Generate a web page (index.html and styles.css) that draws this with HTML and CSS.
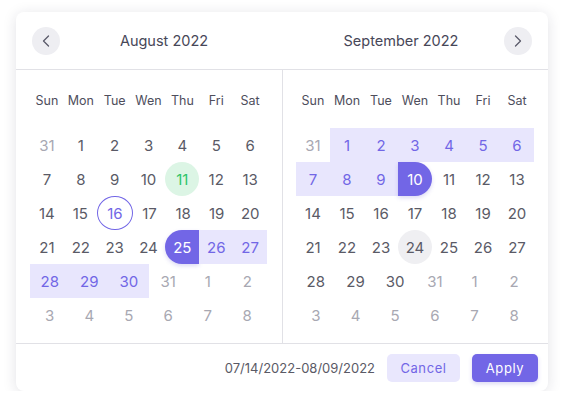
FILE: index.html
```html
<!DOCTYPE html>
<html>
<head>
<meta charset="utf-8">
<link rel="stylesheet" href="styles.css">
</head>
<body>
<div class="card">
  <div class="header">
    <div class="half half-left">
      <button class="nav"><svg width="12" height="12" viewBox="0 0 12 12"><polyline points="8.5,1 3.5,6 8.5,11" fill="none" stroke="#5a5a6a" stroke-width="1.3" stroke-linecap="round" stroke-linejoin="round"/></svg></button>
      <div class="title">August 2022</div>
    </div>
    <div class="half half-right">
      <div class="title">September 2022</div>
      <button class="nav"><svg width="12" height="12" viewBox="0 0 12 12"><polyline points="3.5,1 8.5,6 3.5,11" fill="none" stroke="#5a5a6a" stroke-width="1.3" stroke-linecap="round" stroke-linejoin="round"/></svg></button>
    </div>
  </div>
  <div class="body">
    <div class="panel panel-left">
      <div class="row wd"><span>Sun</span><span>Mon</span><span>Tue</span><span>Wen</span><span>Thu</span><span>Fri</span><span>Sat</span></div>
      <div class="rows">
        <div class="row"><span class="out">31</span><span>1</span><span>2</span><span>3</span><span>4</span><span>5</span><span>6</span></div>
        <div class="row"><span>7</span><span>8</span><span>9</span><span>10</span><span class="today">11</span><span>12</span><span>13</span></div>
        <div class="row"><span>14</span><span>15</span><span class="ring">16</span><span>17</span><span>18</span><span>19</span><span>20</span></div>
        <div class="row"><span>21</span><span>22</span><span>23</span><span>24</span><span class="start">25</span><span class="range">26</span><span class="range">27</span></div>
        <div class="row"><span class="range">28</span><span class="range">29</span><span class="range">30</span><span class="out">31</span><span class="out">1</span><span class="out">2</span></div>
        <div class="row"><span class="out">3</span><span class="out">4</span><span class="out">5</span><span class="out">6</span><span class="out">7</span><span class="out">8</span></div>
      </div>
    </div>
    <div class="panel panel-right">
      <div class="row wd"><span>Sun</span><span>Mon</span><span>Tue</span><span>Wen</span><span>Thu</span><span>Fri</span><span>Sat</span></div>
      <div class="rows">
        <div class="row"><span class="out">31</span><span class="range">1</span><span class="range">2</span><span class="range">3</span><span class="range">4</span><span class="range">5</span><span class="range">6</span></div>
        <div class="row"><span class="range">7</span><span class="range">8</span><span class="range">9</span><span class="end">10</span><span>11</span><span>12</span><span>13</span></div>
        <div class="row"><span>14</span><span>15</span><span>16</span><span>17</span><span>18</span><span>19</span><span>20</span></div>
        <div class="row"><span>21</span><span>22</span><span>23</span><span class="hover">24</span><span>25</span><span>26</span><span>27</span></div>
        <div class="row"><span>28</span><span>29</span><span>30</span><span class="out">31</span><span class="out">1</span><span class="out">2</span></div>
        <div class="row"><span class="out">3</span><span class="out">4</span><span class="out">5</span><span class="out">6</span><span class="out">7</span><span class="out">8</span></div>
      </div>
    </div>
  </div>
  <div class="footer">
    <span class="dates">07/14/2022-08/09/2022</span>
    <button class="btn cancel">Cancel</button>
    <button class="btn apply">Apply</button>
  </div>
</div>
</body>
</html>
```

FILE: styles.css
```css
* { box-sizing: border-box; }
body {
  margin: 0;
  background: #ffffff;
  font-family: Inter, "Liberation Sans", sans-serif;
}
.card {
  margin: 12px 0 0 16px;
  width: 532px;
  height: 379px;
  background: #fff;
  border-radius: 8px;
  box-shadow: 0 2px 14px rgba(30, 30, 60, 0.13);
  display: flex;
  flex-direction: column;
}
.header {
  display: flex;
  height: 58px;
  border-bottom: 1px solid #e1e1e6;
}
.half {
  display: flex;
  align-items: center;
}
.half-left { padding: 0 15px 0 16px; width: 267px; }
.half-right { padding: 0 16px 0 15px; width: 265px; }
.title {
  flex: 1;
  text-align: center;
  font-size: 14.5px;
  font-weight: 400;
  color: #474758;
}
.nav {
  width: 28px;
  height: 28px;
  border: none;
  border-radius: 50%;
  background: #eeeef2;
  display: flex;
  align-items: center;
  justify-content: center;
  padding: 0;
}
.body {
  display: flex;
  height: 273px;
}
.panel {
  padding-top: 13px;
}
.panel-left {
  width: 267px;
  padding-left: 14px;
  padding-right: 15px;
  border-right: 1px solid #e1e1e6;
}
.panel-right {
  width: 265px;
  padding-left: 13px;
  padding-right: 14px;
}
.row {
  display: flex;
  height: 34px;
}
.row span {
  flex: 1;
  display: flex;
  align-items: center;
  justify-content: center;
  font-size: 15px;
  color: #5a5a66;
}
.wd { margin-bottom: 11px; }
.wd span {
  font-size: 12.5px;
  color: #4e4e5c;
}
.row span.out { color: #a8a8b2; }
.row span.range {
  background: #e8e6fd;
  color: #7266e6;
}
.row span.start {
  background: #7266e6;
  color: #fff;
  border-radius: 17px 0 0 17px;
  box-shadow: 0 2px 4px rgba(80, 70, 200, 0.2);
}
.row span.end {
  background: #7266e6;
  color: #fff;
  border-radius: 0 17px 17px 0;
  box-shadow: 0 2px 4px rgba(80, 70, 200, 0.2);
}
.row span.today {
  background: #dcf5e5;
  color: #2cc46a;
  border-radius: 50%;
}
.row span.ring {
  border: 1px solid #7266e6;
  color: #7266e6;
  border-radius: 50%;
}
.row span.hover {
  background: #efeff2;
  border-radius: 50%;
}
.footer {
  flex: 1;
  border-top: 1px solid #e1e1e6;
  display: flex;
  align-items: center;
  justify-content: flex-end;
  padding-right: 10px;
}
.dates {
  font-size: 13px;
  color: #5a5a66;
  margin-right: 12px;
}
.btn {
  height: 28px;
  border: none;
  border-radius: 5px;
  font-family: Inter, "Liberation Sans", sans-serif;
  font-size: 13px;
  letter-spacing: 0.6px;
  padding: 0;
}
.cancel {
  width: 73px;
  background: #e9e7fd;
  color: #7266e6;
  margin-right: 12px;
}
.apply {
  width: 66px;
  background: #7266e6;
  color: #fff;
  box-shadow: 0 2px 4px rgba(80, 70, 200, 0.2);
}
```
